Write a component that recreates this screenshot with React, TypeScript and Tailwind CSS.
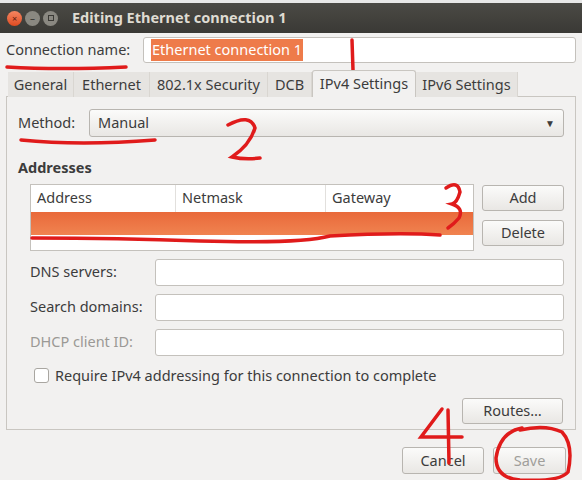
import React from "react";

const Btn = ({ children, className = "", disabled = false }: { children: React.ReactNode; className?: string; disabled?: boolean }) => (
  <div className={`flex items-center justify-center rounded-[3px] border border-[#b8b5b0] bg-gradient-to-b from-[#fbfbfa] to-[#e9e7e4] text-[14.5px] ${disabled ? "text-[#a09e9a]" : "text-[#3c3c3c]"} ${className}`}>
    {children}
  </div>
);

const Input = ({ className = "", children }: { className?: string; children?: React.ReactNode }) => (
  <div className={`rounded-[3px] border border-[#c4c1bc] bg-white ${className}`}>{children}</div>
);

export default function App() {
  const tabs = ["General", "Ethernet", "802.1x Security", "DCB", "IPv4 Settings", "IPv6 Settings"];
  const widths = [66, 76, 118, 44, 104, 102];
  return (
    <div className="relative h-[480px] w-[582px] overflow-hidden bg-[#f2f1f0] text-[14.5px] text-[#3c3c3c]" style={{ fontFamily: '"Noto Sans", "Open Sans", sans-serif' }}>
      <div className="h-[3px] bg-[#e8e8e8]" />
      <div className="flex h-[30px] items-center bg-gradient-to-b from-[#4b4a45] to-[#3a3935] pl-[7px]">
        <div className="flex h-[15px] w-[15px] items-center justify-center rounded-full bg-gradient-to-b from-[#f48560] to-[#df4a1e] text-[9px] leading-none text-[#5a2010]">×</div>
        <div className="ml-[3px] flex h-[15px] w-[15px] items-center justify-center rounded-full bg-[#8a8881] text-[10px] leading-none text-[#3a3935]">–</div>
        <div className="ml-[3px] flex h-[15px] w-[15px] items-center justify-center rounded-full bg-[#8a8881]"><div className="h-[6px] w-[6px] border border-[#3a3935]" /></div>
        <div className="ml-[14px] text-[14.5px] font-bold text-[#dfdbd2]">Editing Ethernet connection 1</div>
      </div>
      <div className="flex items-center px-[6px] pt-[4px]">
        <div className="w-[137px]">Connection name:</div>
        <Input className="flex h-[26px] flex-1 items-center pl-[7px]">
          <span className="bg-[#ee7b4a] px-px text-white">Ethernet connection 1</span>
        </Input>
      </div>
      <div className="mt-[7px] flex px-[8px]">
        {tabs.map((t, i) => (
          <div key={t} style={{ width: widths[i] }}
            className={i === 4 ? "relative z-10 flex h-[27px] items-center justify-center rounded-t-[3px] border border-b-0 border-[#c9c6c1] bg-[#f2f1f0]" : "mt-[2px] flex h-[25px] items-center justify-center border-r border-[#d9d6d1] bg-[#e6e4e1]"}>
            {t}
          </div>
        ))}
      </div>
      <div className="mx-[6px] -mt-px h-[334px] border border-[#c9c6c1] pl-[11px] pr-[11px]">
        <div className="mt-[12px] flex items-center">
          <div className="w-[71px]">Method:</div>
          <Btn className="h-[28px] flex-1 !justify-between px-[8px]"><span>Manual</span><span className="text-[10px]">▼</span></Btn>
        </div>
        <div className="mt-[20px] font-bold">Addresses</div>
        <div className="mt-[5px] flex pl-[12px]">
          <div className="h-[67px] w-[444px] border border-[#c4c1bc] bg-white">
            <div className="flex h-[27px] items-center">
              <div className="flex h-full w-[145px] items-center border-r border-[#e2e0dd] pl-[6px]">Address</div>
              <div className="flex h-full w-[150px] items-center border-r border-[#e2e0dd] pl-[6px]">Netmask</div>
              <div className="pl-[6px]">Gateway</div>
            </div>
            <div className="h-[23px] bg-gradient-to-b from-[#e9693a] to-[#f08350]" />
          </div>
          <div className="ml-[8px] flex flex-col gap-[9px] pt-[1px]">
            <Btn className="h-[26px] w-[82px]">Add</Btn>
            <Btn className="h-[26px] w-[82px]">Delete</Btn>
          </div>
        </div>
        <div className="ml-[12px] mt-[8px] flex flex-col gap-[8px]">
          {[["DNS servers:", false], ["Search domains:", false], ["DHCP client ID:", true]].map(([l, d]) => (
            <div key={l as string} className="flex items-center">
              <div className={`w-[125px] ${d ? "text-[#9b9995]" : ""}`}>{l as string}</div>
              <Input className={`h-[27px] w-[410px] ${d ? "bg-[#f5f4f3]" : ""}`} />
            </div>
          ))}
        </div>
        <div className="ml-[16px] mt-[9px] flex items-center">
          <div className="h-[15px] w-[15px] rounded-[3px] border border-[#a9a6a1] bg-white" />
          <span className="ml-[6px]">Require IPv4 addressing for this connection to complete</span>
        </div>
        <div className="mt-[11px] flex justify-end pr-[1px]">
          <Btn className="h-[26px] w-[101px]">Routes…</Btn>
        </div>
      </div>
      <div className="mt-[17px] flex justify-end gap-[9px] pr-[16px]">
        <Btn className="h-[27px] w-[82px]">Cancel</Btn>
        <Btn className="h-[27px] w-[73px]" disabled>Save</Btn>
      </div>
      <svg className="pointer-events-none absolute left-0 top-0" width="582" height="480" fill="none" stroke="#e01b1b" strokeWidth="3.5" strokeLinecap="round">
        <path d="M7 67 Q60 70 126 67" />
        <path d="M352 40 L353 70" />
        <path d="M21 140 Q80 146 155 140" />
        <path d="M228 125 Q250 113 255 128 Q250 145 232 157 Q245 160 260 158" />
        <path d="M32 238 Q120 238 200 241 Q300 244 330 236 Q400 232 440 235" />
        <path d="M446 188 Q458 180 460 192 Q457 203 452 204 Q464 208 459 218 Q454 224 448 228" />
        <path d="M442 409 L421 437 L462 437" />
        <path d="M448 410 L449 463" />
        <path d="M522 428 Q500 432 496 458 Q496 478 520 480 Q560 482 568 472 Q574 445 562 432 Q545 424 520 430" />
      </svg>
    </div>
  );
}
